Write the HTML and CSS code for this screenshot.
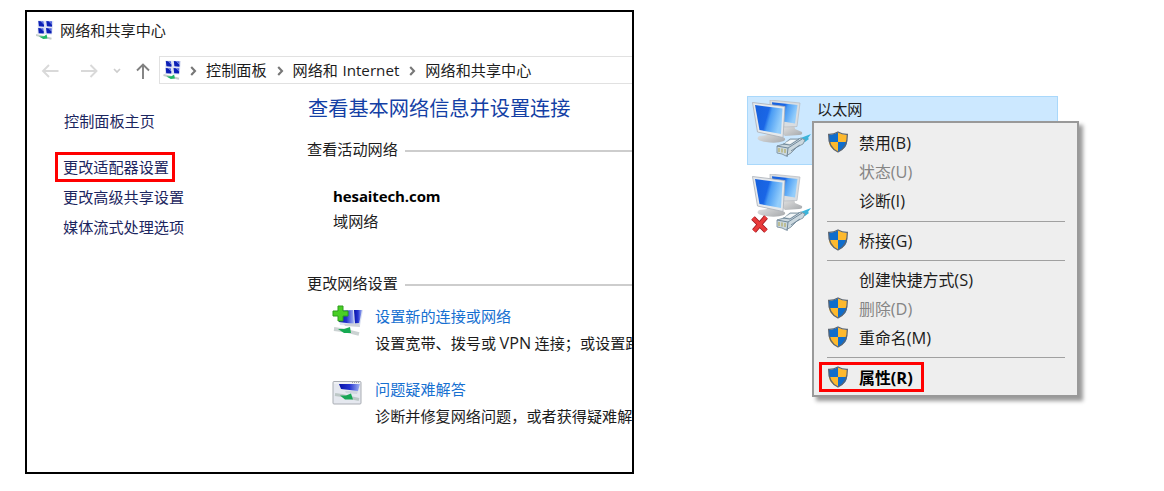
FILE: index.html
```html
<!DOCTYPE html>
<html lang="zh-CN">
<head>
<meta charset="utf-8">
<title>网络和共享中心</title>
<link rel="stylesheet" href="styles.css">
</head>
<body>
<svg class="defs" width="0" height="0">
  <defs>
    <linearGradient id="screen" x1="0" y1="0" x2="1" y2=".3"><stop offset="0" stop-color="#1660dc"/><stop offset=".5" stop-color="#1a66e6"/><stop offset=".62" stop-color="#4a9cf4"/><stop offset="1" stop-color="#93cdfb"/></linearGradient>
    <linearGradient id="navy" x1="0" y1="0" x2="1" y2="0"><stop offset="0" stop-color="#0712a8"/><stop offset=".5" stop-color="#2433d0"/><stop offset="1" stop-color="#a3b4f2"/></linearGradient>
    <linearGradient id="stand" x1="0" y1="0" x2="1" y2="1"><stop offset="0" stop-color="#ececec"/><stop offset="1" stop-color="#a5a8ab"/></linearGradient>
    <symbol id="center" viewBox="0 0 18 20">
      <path d="M2 .5l15.500 .5-1.500 13.500-14.500-.5z" fill="#dfe3f3"/>
      <path d="M2.300 1l2.500.2 3.300 3.500-.2 2-5-.4zM10.300 1l2.500.2 3.300 3.500-.2 2-5-.4zM2.200 8l2.500.2 3.200 3.300-.2 2-5-.3zM10 8l2.500.2 3.200 3.300-.2 2-4.800-.3z" fill="#0b1fb6"/>
      <path d="M4.800 1.200l2.600.1.500 3.200zM12.800 1.200l3.200.1v3.200zM4.700 8.200l2.600.1.400 3.200zM12.500 8.200l3.200.1-.1 3.200z" fill="#4e63dc"/>
      <path d="M0 15l5 1.200 10.500 2.600" stroke="#c5cecb" stroke-width="2" fill="none"/>
      <path d="M3 16.500l5-.2 2.600-1.700.8 4-4.100.5z" fill="#1fb765"/>
    </symbol>
    <symbol id="shield" viewBox="0 0 22 23">
      <path d="M11 1.300C8 3 4.800 3.900 1.500 3.800v7.700H11z" fill="#0f6dcc"/>
      <path d="M11 1.300c3 1.700 6.200 2.600 9.500 2.500v7.700H11z" fill="#fdb92e"/>
      <path d="M1.500 11.500H11V21.700C5.500 19.500 2 16.500 1.500 11.500z" fill="#fdb92e"/>
      <path d="M20.500 11.500H11V21.700c5.500-2.200 9-5.200 9.500-10.200z" fill="#0f6dcc"/>
      <path d="M11 1C8 2.800 4.500 3.600 1.200 3.500 1 12 3 18.500 11 22 19 18.500 21 12 20.800 3.500 17.500 3.600 14 2.800 11 1z" fill="none" stroke="#5b6470" stroke-width="1.300"/>
    </symbol>
    <symbol id="adapter" viewBox="0 0 60 58">
      <path d="M34 24l8 0 1 5 7 3q1 3-3 3l-14 1-5-5z" fill="url(#stand)"/>
      <path d="M18 0L48 3 45 26.500 33 27 18 24z" fill="#d9dde1" stroke="#b4b9be" stroke-width=".7"/>
      <path d="M20 2.300L45.500 5 43 23.500 22 20z" fill="url(#screen)"/>
      <path d="M14 30l12 2 1 4q9 2 5 5-8 3-18 1-12-2-7-6l8-1z" fill="url(#stand)"/>
      <path d="M.5 2.500L33 6.500 31 37.500 5.500 32z" fill="#e6e9ec" stroke="#a9afb6" stroke-width=".8"/>
      <path d="M3 5l27.500 3.500-1.500 25.500L7.500 30z" fill="url(#screen)"/>
      <path d="M46 39l13-5-3 4 1 1-4 3-8 2z" fill="#3cb4da"/>
      <path d="M25 46l7-2 6-5 8 0 3-1 4 2-2 4-6 3-6 6-5 3-4-2-5-1z" fill="#cbd8df" stroke="#7e929f" stroke-width=".9"/>
      <path d="M25 46l11 2-1 9M36 48l14-9M31 44l7 1 9-6M39 51l9-6" stroke="#71889a" fill="none"/>
      <path d="M33 43l6-3 5 0-6 4z" fill="#f4f7f8"/>
      <path d="M27 48v4M30 48.500v4M33 49v4" stroke="#b5b06f" stroke-width="1.300"/>
    </symbol>
  </defs>
</svg>
<div class="page">
  <section class="window">
    <header class="titlebar"><svg class="ico-center" width="18" height="20"><use href="#center"/></svg><span>网络和共享中心</span></header>
    <nav class="toolbar">
      <svg class="arrows" width="132" height="28" fill="none">
        <path d="M31.500 15H16M22 9l-6 6 6 6" stroke="#d9d9d9" stroke-width="1.900"/>
        <path d="M54 15h15.500M63.500 9l6 6-6 6" stroke="#d9d9d9" stroke-width="1.900"/>
        <path d="M87 13l3 3 3-3" stroke="#cdcdcd" stroke-width="1.700"/>
        <path d="M116 23V8.500M110 14.500l6-6 6 6" stroke="#808080" stroke-width="1.900"/>
      </svg>
      <div class="address">
        <svg class="ico-center" width="19" height="20"><use href="#center"/></svg>
        <svg class="chev" width="7" height="10"><path d="M1.200 1l3.800 4-3.800 4"/></svg>
        <span class="crumb c1">控制面板</span>
        <svg class="chev" width="7" height="10"><path d="M1.200 1l3.800 4-3.800 4"/></svg>
        <span class="crumb c2">网络和 <span class="latin">Internet</span></span>
        <svg class="chev" width="7" height="10"><path d="M1.200 1l3.800 4-3.800 4"/></svg>
        <span class="crumb">网络和共享中心</span>
      </div>
    </nav>
    <div class="body">
      <aside class="side">
        <div class="home">控制面板主页</div>
        <div class="marked">更改适配器设置</div>
        <div class="task">更改高级共享设置</div>
        <div class="task">媒体流式处理选项</div>
      </aside>
      <main class="main">
        <h1>查看基本网络信息并设置连接</h1>
        <div class="group">查看活动网络</div>
        <div class="network">
          <div class="domain">hesaitech.com</div>
          <div class="kind">域网络</div>
        </div>
        <div class="group">更改网络设置</div>
        <div class="option first">
          <svg width="32" height="32">
            <path d="M5 5l26 0-3 16-20-1z" fill="#dde3f2"/>
            <path d="M7 6l14-1 1 14-15-2z" fill="url(#navy)"/><path d="M22 5l8 0-3 14-4 0z" fill="url(#navy)"/>
            <path d="M12 19l15-1 1 4-15-1z" fill="#d0d3d8"/>
            <path d="M2 24l8 1 9 2 8 2" stroke="#cbd2d2" stroke-width="3.800" fill="none"/>
            <path d="M6 24l6 0 6-2 1 6-7 0z" fill="#16aa52"/>
            <path d="M6 1h5v5h5v5h-5v5H6v-5H1V6h5z" fill="#49cf25" stroke="#2d9d1d"/>
          </svg>
          <div><div class="link">设置新的连接或网络</div><div class="desc">设置宽带、拨号或 <span class="latin vpn">VPN</span> 连接；或设置路</div></div>
        </div>
        <div class="option second">
          <svg width="32" height="32">
            <rect x="1" y="3.500" width="28" height="22.500" rx="1" fill="#e5e8ef" stroke="#a9adb3"/>
            <path d="M2 5h26" stroke="#fafafa"/><path d="M20 4.500h7" stroke="#a6a6a6" stroke-dasharray="1 1"/>
            <path d="M7 6h21l-2 7-17-2z" fill="url(#navy)"/><path d="M13 13l13 0-1 3-11-1z" fill="#d0d6df"/>
            <path d="M3 16.500l7 1 8 2 9 2" stroke="#bcc7c6" stroke-width="3" fill="none"/>
            <path d="M8 17.500l6 0 5-2 2 6-8 0z" fill="#18a654"/>
          </svg>
          <div><div class="link">问题疑难解答</div><div class="desc">诊断并修复网络问题，或者获得疑难解</div></div>
        </div>
      </main>
    </div>
  </section>
  <section class="adapters">
    <div class="adapter selected"><svg width="60" height="58"><use href="#adapter"/></svg><span>以太网</span></div>
    <div class="adapter offline">
      <svg width="60" height="58"><use href="#adapter"/></svg>
      <svg class="cross" width="20" height="20"><path d="M3 4l13 13M16 3L4 17" stroke="#9d1720" stroke-width="5"/><path d="M3 4l13 13M16 3L4 17" stroke="#e83a3a" stroke-width="3.500"/></svg>
    </div>
    <div class="menu">
      <div class="item"><svg><use href="#shield"/></svg><span>禁用<i>(B)</i></span></div>
      <div class="item disabled"><svg></svg><span>状态<i>(U)</i></span></div>
      <div class="item"><svg></svg><span>诊断<i>(I)</i></span></div>
      <div class="sep"></div>
      <div class="item"><svg><use href="#shield"/></svg><span>桥接<i>(G)</i></span></div>
      <div class="sep"></div>
      <div class="item"><svg></svg><span>创建快捷方式<i>(S)</i></span></div>
      <div class="item disabled"><svg><use href="#shield"/></svg><span>删除<i>(D)</i></span></div>
      <div class="item"><svg><use href="#shield"/></svg><span>重命名<i>(M)</i></span></div>
      <div class="sep"></div>
      <div class="item default"><svg><use href="#shield"/></svg><span>属性<i>(R)</i></span></div>
    </div>
  </section>
</div>
</body>
</html>
```
FILE: styles.css
```css
* { box-sizing: border-box; }
body { margin: 0; background: #fff; font: 15.15px/30px "Noto Sans CJK SC", sans-serif; color: #1c1c1c; }
.defs { position: absolute; }
svg { display: block; flex: none; }
.page { display: flex; width: 1164px; height: 491px; overflow: hidden; }
.window { width: 609px; height: 464px; margin: 10px 0 0 25px; border: 2px solid #000; overflow: hidden; flex: none; white-space: nowrap; }
.titlebar { display: flex; align-items: center; height: 30px; margin-top: 3px; padding-left: 9px; gap: 6px; line-height: 28px; }
.titlebar span { margin-top: -2px; }
.toolbar { display: flex; height: 28px; margin-top: 11px; }
.address { display: flex; align-items: center; flex: 1; border: 1px solid #e1e1e1; border-right: 0; padding-left: 3px; }
.address .chev { margin: 1px 9px 0 8px; }
.crumb { height: 30px; margin-top: -2px; }
.c1 { margin-right: 2px; }
.c2 { margin-right: 2px; word-spacing: 1px; }
.chev path { fill: none; stroke: #777; stroke-width: 2.1; }
.latin { font-family: "Open Sans", sans-serif; font-size: 15.2px; }
.vpn { font-size: 16.2px; }
.body { display: flex; padding-top: 1px; }
.side { width: 280px; color: #1c2660; }
.home { margin: 20px 0 0 37px; }
.marked { width: 120px; height: 30px; margin: 17px 0 0 28px; border: 3px solid #f00; padding-left: 5px; line-height: 22px; }
.task { position: relative; top: -1px; padding-left: 36px; }
.main { flex: 1; min-width: 0; }
h1 { margin: 7px 0 0 1px; font-size: 20.2px; font-weight: 400; line-height: 32px; color: #143fa5; }
.group { display: flex; align-items: center; gap: 7px; height: 30px; margin: 9px 0 0; }
.group::after { content: ""; flex: 1; height: 2px; background: #cdcdcd; margin-top: 6px; }
.network { padding: 21px 0 0 26px; height: 95px; line-height: 23px; }
.domain { font: bold 15px/25px "Open Sans", sans-serif; letter-spacing: -.1px; color: #000; }
.option { display: flex; gap: 11px; padding-left: 25px; line-height: 27px; }
.option svg { margin-top: 3px; }
.option.first { margin-top: 5px; }
.option.second { margin-top: 18px; }
.link { color: #1670d1; }
.adapters { position: relative; width: 311px; margin: 96px 0 0 113px; }
.adapter { display: flex; height: 69px; padding: 3px 0 0 4px; }
.adapter.selected { background: #cce8ff; border: 1px solid #a9d8fb; }
.adapter span { margin-left: 5px; line-height: 16px; }
.offline { position: relative; margin-top: 6px; padding-left: 5px; }
.cross { position: absolute; left: 3px; top: 43px; }
.menu { position: absolute; left: 65px; top: 25px; width: 267px; height: 276px; border: 2px solid #999; background: #eee; padding: 5px 0; box-shadow: 4px 4px 4px rgba(0,0,0,.4); font-size: 15.9px; }
.item { display: flex; align-items: center; gap: 10px; height: 29.2px; padding-left: 13px; line-height: 29px; white-space: nowrap; }
.item svg { width: 22px; height: 22px; margin-top: -1px; }
.item i { font: inherit; font-family: "Open Sans", sans-serif; font-size: 16.4px; }
.item.disabled { color: #858585; }
.item.default { width: 105px; height: 30px; margin-left: 5px; padding-left: 5px; border: 3px solid #f00; font-weight: 700; color: #000; }
.sep { height: 1px; margin: 5px 12px 4px 13px; background: #a0a0a0; }
```
